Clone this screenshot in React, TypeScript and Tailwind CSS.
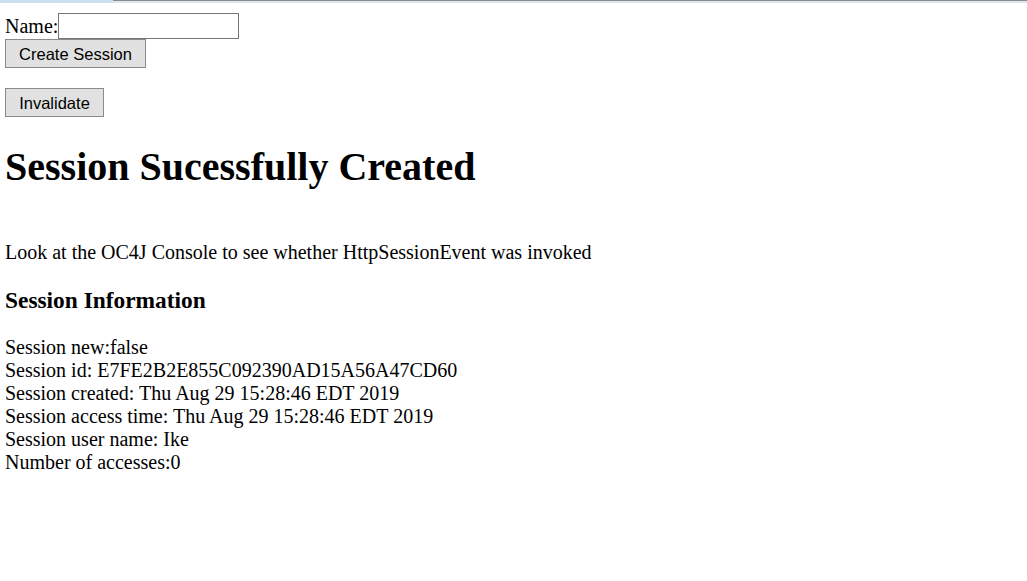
import React from "react";

const info = [
  "Session new:false",
  "Session id: E7FE2B2E855C092390AD15A56A47CD60",
  "Session created: Thu Aug 29 15:28:46 EDT 2019",
  "Session access time: Thu Aug 29 15:28:46 EDT 2019",
  "Session user name: Ike",
  "Number of accesses:0",
];

const btn =
  "block border border-[#8a8a8a] bg-[#e1e1e1] px-[13px] font-['Liberation_Sans',Arial,sans-serif] text-[16.5px] leading-[20px] text-black";

export default function App() {
  return (
    <div className="min-h-screen bg-white font-['Liberation_Serif','Times_New_Roman',serif] text-[20px] leading-[23px] text-black">
      <div className="flex h-[3px]">
        <div className="w-[113px] bg-[#cddff0]" />
        <div className="flex-1 border-t border-[#8c8c8c] bg-[#dbe6f2]" />
      </div>

      <div className="px-[5px]">
        <form className="pt-[10px]" onSubmit={(e) => e.preventDefault()}>
          <div className="flex h-[26px] items-end">
            <span className="mb-[1px]">Name:</span>
            <input
              type="text"
              className="h-[26px] w-[181px] border border-[#767676] bg-white px-1 font-['Liberation_Sans',sans-serif] text-[16px] outline-none"
            />
          </div>
          <button type="submit" className={`${btn} h-[29px] w-[141px]`}>
            Create Session
          </button>
        </form>

        <button className={`${btn} mt-[20px] h-[29px] w-[99px]`}>Invalidate</button>

        <h1 className="mt-[27px] text-[40px] font-bold leading-[46px]">
          Session Sucessfully Created
        </h1>

        <p className="mt-[51px]">Look at the OC4J Console to see whether HttpSessionEvent was invoked</p>

        <h3 className="mt-[23px] text-[23.4px] font-bold leading-[27px]">Session Information</h3>

        <div className="mt-[22px]">
          {info.map((line) => (
            <div key={line}>{line}</div>
          ))}
        </div>
      </div>
    </div>
  );
}
